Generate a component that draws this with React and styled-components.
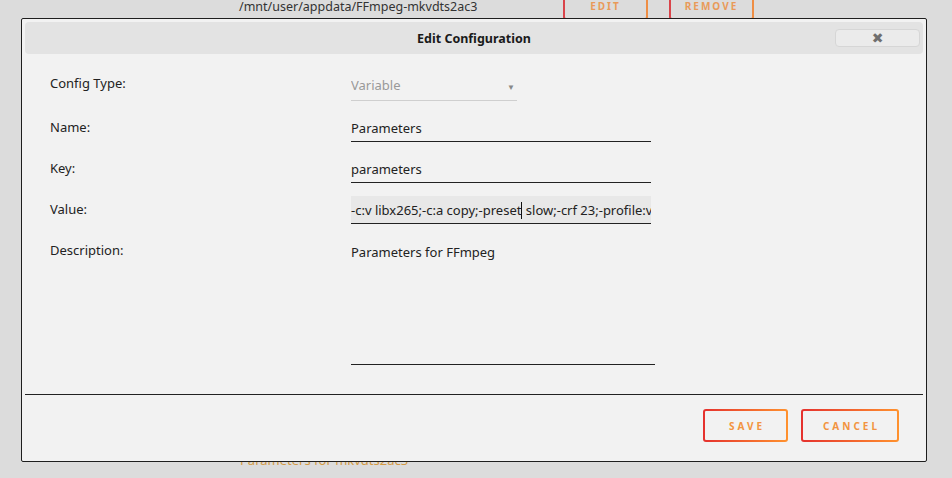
import React from 'react';
import styled, { createGlobalStyle } from 'styled-components';

const GlobalStyle = createGlobalStyle`
    html, body {
        margin: 0;
        padding: 0;
        background: #dcdcdc;
        font-family: "Noto Sans", "Open Sans", sans-serif;
        font-size: 13px;
        color: #222;
    }
`;

const Page = styled.div`
    width: 952px;
    height: 478px;
    overflow: hidden;
    position: relative;
`;

const BackRow = styled.div`
    display: flex;
    align-items: flex-start;
    padding-left: 239px;
    height: 22px;
`;

const PathText = styled.div`
    width: 324px;
    line-height: 14px;
    font-size: 12.5px;
    color: #333;
`;

const GhostButton = styled.div`
    width: 85px;
    height: 40px;
    margin-top: -20px;
    margin-right: 21px;
    box-sizing: border-box;
    border: 2px solid transparent;
    border-radius: 3px;
    background: linear-gradient(#dcdcdc, #dcdcdc) padding-box,
        linear-gradient(90deg, #d9434a, #ef8f45) border-box;
    display: flex;
    align-items: flex-end;
    justify-content: center;
    padding-bottom: 5px;
    font-size: 10px;
    font-weight: 700;
    letter-spacing: 2px;
    color: #e99a59;
`;

const BackDescription = styled.div`
    margin-top: 431px;
    padding-left: 240px;
    color: #d49a45;
    font-size: 13px;
    line-height: 14px;
`;

const Modal = styled.div`
    position: absolute;
    left: 21px;
    top: 18px;
    width: 906px;
    height: 444px;
    box-sizing: border-box;
    border: 1px solid #1e1e1e;
    border-radius: 2px;
    background: #f2f2f2;
    display: flex;
    flex-direction: column;
    padding: 3px 3px 0;
`;

const TitleBar = styled.div`
    height: 32px;
    background: #e3e3e3;
    border-radius: 4px;
    display: grid;
    grid-template-columns: 1fr auto 1fr;
    align-items: center;
    padding: 0 3px;
`;

const Title = styled.div`
    font-weight: 700;
    font-size: 12.5px;
    color: #1a1a1a;
    grid-column: 2;
`;

const CloseButton = styled.div`
    grid-column: 3;
    justify-self: end;
    width: 85px;
    height: 18px;
    box-sizing: border-box;
    background: #ebebeb;
    border: 1px solid #d6d6d6;
    border-radius: 4px;
    display: flex;
    align-items: center;
    justify-content: center;
    color: #6f6f6f;
    font-size: 14px;
    line-height: 1;
    font-family: "DejaVu Sans", sans-serif;
`;

const Form = styled.div`
    display: grid;
    grid-template-columns: 301px 304px;
    row-gap: 13px;
    padding: 19px 0 0 25px;
`;

const Label = styled.div`
    line-height: 26px;
    margin-top: ${p => p.$shift || 0}px;
    color: #222;
`;

const Field = styled.div`
    position: relative;
    width: ${p => p.$width || 300}px;
    height: ${p => p.$height || 28}px;
    box-sizing: border-box;
    border-bottom: 1px solid ${p => (p.$muted ? '#cfcfcf' : '#222')};
    background: ${p => (p.$active ? '#e8e8e8' : 'transparent')};
    display: flex;
    align-items: ${p => (p.$top ? 'flex-start' : 'center')};
    padding-top: ${p => (p.$top ? '6px' : '0')};
    padding-bottom: ${p => p.$lift || 0}px;
    overflow: hidden;
    color: ${p => (p.$muted ? '#999' : '#222')};
`;

const FieldText = styled.span`
    white-space: pre;
`;

const Arrow = styled.span`
    position: absolute;
    right: 2px;
    top: 8px;
    font-size: 8px;
    color: #888;
`;

const Caret = styled.span`
    display: inline-block;
    width: 1px;
    height: 17px;
    background: #111;
    vertical-align: -4px;
`;

const Divider = styled.div`
    height: 1px;
    background: #222;
    margin-top: 29px;
`;

const Footer = styled.div`
    display: flex;
    justify-content: flex-end;
    gap: 13px;
    padding: 14px 24px 0 0;
`;

const ActionButton = styled.div`
    width: ${p => p.$width}px;
    height: 33px;
    box-sizing: border-box;
    border: 2px solid transparent;
    border-radius: 3px;
    background: linear-gradient(#f2f2f2, #f2f2f2) padding-box,
        linear-gradient(90deg, #e5312e, #ff922e) border-box;
    display: flex;
    align-items: center;
    justify-content: center;
    font-size: 10px;
    font-weight: 700;
    letter-spacing: 3px;
    padding-left: 3px;
    color: #f29440;
`;

export default function App() {
    return (
        <Page>
            <GlobalStyle />
            <BackRow>
                <PathText>/mnt/user/appdata/FFmpeg-mkvdts2ac3</PathText>
                <GhostButton>EDIT</GhostButton>
                <GhostButton>REMOVE</GhostButton>
            </BackRow>
            <BackDescription>Parameters for mkvdts2ac3</BackDescription>

            <Modal>
                <TitleBar>
                    <Title>Edit Configuration</Title>
                    <CloseButton>✖</CloseButton>
                </TitleBar>
                <Form>
                    <Label $shift={-3}>Config Type:</Label>
                    <Field $width={166} $lift={3} $muted>
                        <FieldText>Variable</FieldText>
                        <Arrow>▼</Arrow>
                    </Field>
                    <Label>Name:</Label>
                    <Field><FieldText>Parameters</FieldText></Field>
                    <Label>Key:</Label>
                    <Field><FieldText>parameters</FieldText></Field>
                    <Label>Value:</Label>
                    <Field $active>
                        <FieldText>
                            -c:v libx265;-c:a copy;-preset<Caret /> slow;-crf 23;-profile:v main10;-pix_fmt yuv420p10le
                        </FieldText>
                    </Field>
                    <Label>Description:</Label>
                    <Field $width={304} $height={128} $top>
                        <FieldText>Parameters for FFmpeg</FieldText>
                    </Field>
                </Form>
                <Divider />
                <Footer>
                    <ActionButton $width={85}>SAVE</ActionButton>
                    <ActionButton $width={98}>CANCEL</ActionButton>
                </Footer>
            </Modal>
        </Page>
    );
}
